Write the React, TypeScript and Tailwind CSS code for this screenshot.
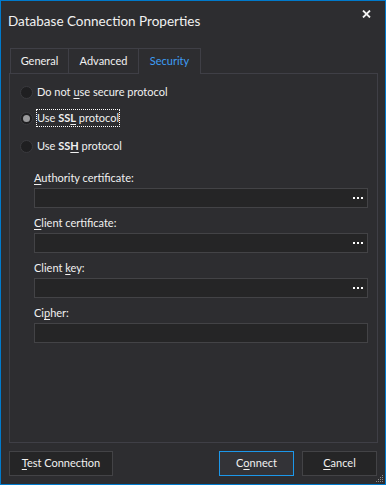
import React from "react";

const FONT = { fontFamily: '"Segoe UI", Lato, "Noto Sans", sans-serif' };

function U({ children }: { children: React.ReactNode }) {
  return <span className="underline underline-offset-2 decoration-1">{children}</span>;
}

function Radio({ checked, children, focus }: { checked?: boolean; children: React.ReactNode; focus?: boolean }) {
  return (
    <div className="flex h-[16px] items-center">
      <span className="ml-[10px] flex h-[13px] w-[13px] items-center justify-center rounded-full border border-[#3a3a3e] bg-[#1f1f21]">
        {checked && <span className="h-[7px] w-[7px] rounded-full bg-[#9a9a9c]" />}
      </span>
      <span
        className={
          "ml-[3px] flex h-[18px] items-center px-[1px] " +
          (focus ? "outline outline-1 outline-dotted outline-white -outline-offset-1" : "")
        }
      >
        <span>{children}</span>
      </span>
    </div>
  );
}

function Field({ label, browse }: { label: React.ReactNode; browse?: boolean }) {
  return (
    <div className="flex flex-col">
      <div className="flex h-[16px] items-center">{label}</div>
      <div className="mt-[2px] flex h-[20px] w-[334px] items-center justify-end border border-[#434346] bg-[#252526] pr-[4px]">
        {browse && (
          <span className="flex gap-[2px]">
            <span className="h-[2px] w-[2px] bg-white" />
            <span className="h-[2px] w-[2px] bg-white" />
            <span className="h-[2px] w-[2px] bg-white" />
          </span>
        )}
      </div>
    </div>
  );
}

export default function App() {
  return (
    <div
      className="relative flex h-[485px] w-[386px] flex-col border border-[#007acc] bg-[#2d2d30] text-[11px] text-[#f1f1f1]"
      style={FONT}
    >
      {/* title bar */}
      <div className="flex h-[47px] items-start justify-between">
        <div className="ml-[7px] mt-[10px] text-[13.5px] leading-[20px]">Database Connection Properties</div>
        <svg className="mr-[14px] mt-[9px]" width="9" height="8" viewBox="0 0 9 8">
          <path d="M1 0.5 L8 7.5 M8 0.5 L1 7.5" stroke="#f1f1f1" strokeWidth="1.8" />
        </svg>
      </div>

      {/* tabs */}
      <div className="ml-[9px] flex h-[25px]">
        <div className="flex w-[59px] items-center justify-center border border-b-0 border-[#3f3f46]">General</div>
        <div className="flex w-[70px] items-center justify-center border border-b-0 border-l-0 border-[#3f3f46]">Advanced</div>
        <div className="relative z-10 -mb-px flex h-[26px] w-[62px] items-center justify-center border border-b-0 border-l-0 border-[#3f3f46] bg-[#2d2d30] pb-px text-[#3e9df5]">
          Security
        </div>
      </div>

      {/* panel */}
      <div className="ml-[8px] flex h-[370px] w-[369px] flex-col border border-[#3f3f46] pt-[10px]">
        <Radio>
          Do not <U>u</U>se secure protocol
        </Radio>
        <div className="mt-[10px]">
          <Radio checked focus>
            Use <b className="font-bold">SS<U>L</U></b> protocol
          </Radio>
        </div>
        <div className="mt-[12px]">
          <Radio>
            Use <b className="font-bold">SS<U>H</U></b> protocol
          </Radio>
        </div>

        <div className="ml-[24px] mt-[16px] flex flex-col gap-[7px]">
          <Field label={<span><U>A</U>uthority certificate:</span>} browse />
          <Field label={<span><U>C</U>lient certificate:</span>} browse />
          <Field label={<span>Client <U>k</U>ey:</span>} browse />
          <Field label={<span>Ci<U>p</U>her:</span>} />
        </div>
      </div>

      {/* buttons */}
      <div className="ml-[8px] mt-[8px] flex">
        <button className="flex h-[25px] w-[104px] items-center justify-center border border-[#434346] bg-[#252526]">
          <span><U>T</U>est Connection</span>
        </button>
        <button className="ml-[106px] flex h-[25px] w-[75px] items-center justify-center border border-[#1c97ea] bg-[#333337]">
          <span>C<U>o</U>nnect</span>
        </button>
        <button className="ml-[8px] flex h-[25px] w-[75px] items-center justify-center border border-[#434346] bg-[#252526]">
          <span><U>C</U>ancel</span>
        </button>
      </div>

      {/* resize grip */}
      <svg className="absolute bottom-[1px] right-[1px]" width="8" height="8" viewBox="0 0 8 8">
        {[
          [6, 0], [6, 2], [6, 4], [6, 6], [4, 2], [4, 4], [4, 6], [2, 4], [2, 6], [0, 6],
        ].map(([x, y], i) => (
          <rect key={i} x={x} y={y} width="1" height="1" fill="#8a8a8a" />
        ))}
      </svg>
    </div>
  );
}
